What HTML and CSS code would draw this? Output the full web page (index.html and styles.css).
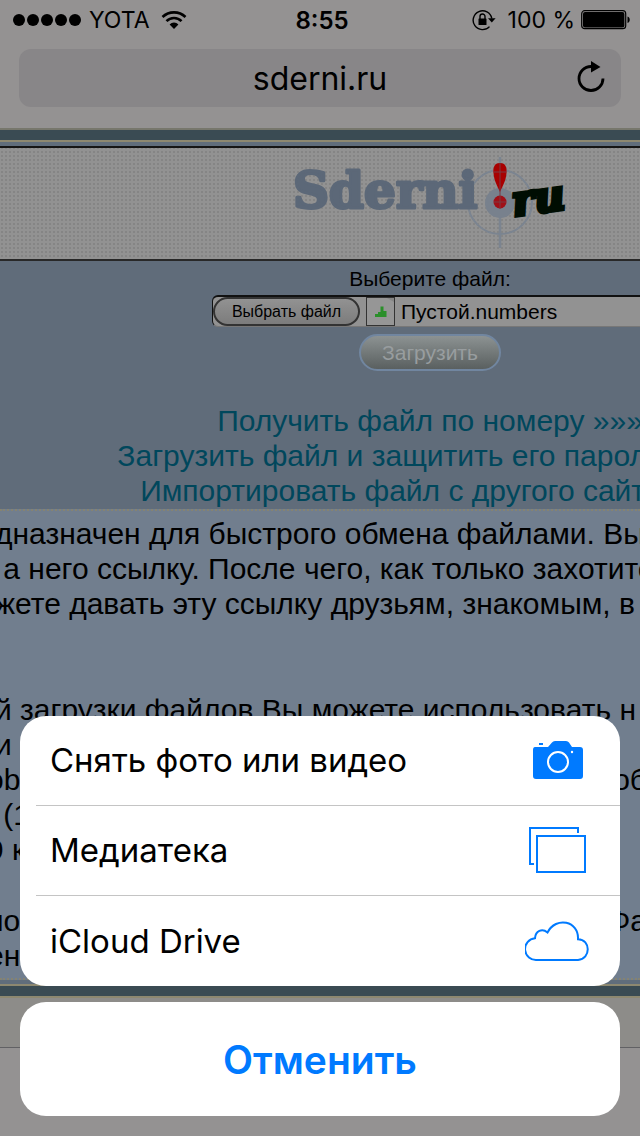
FILE: index.html
```html
<!DOCTYPE html>
<html lang="ru">
<head>
  <meta charset="UTF-8" />
  <meta name="viewport" content="width=device-width, initial-scale=1.0" />
  <title>sderni.ru</title>
  <link rel="stylesheet" href="styles.css">
</head>
<body>
  <div class="screen">
    <!-- Safari -->
    <header class="browser">
      <div class="status">
        <div class="status-left">
          <span class="dots"><i></i><i></i><i></i><i></i><i></i></span>
          <span>YOTA</span>
          <svg class="wifi" width="26" height="20" viewBox="0 0 26 20">
            <path d="M1.500 7a16.500 16.500 0 0 1 23 0M5.500 11.200a10.500 10.500 0 0 1 15 0" fill="none" stroke="#000" stroke-width="2.600"/>
            <path d="M8.600 14.400a6.200 6.200 0 0 1 8.800 0L13 19z"/>
          </svg>
        </div>
        <b class="time">8:55</b>
        <div class="status-right">
          <svg width="24" height="22" viewBox="0 0 24 22">
            <path d="M17.500 17.600A9.400 9.400 0 1 1 19.800 9.500" fill="none" stroke="#000" stroke-width="1.400"/>
            <path d="M16 9.300h7.600l-3.800 4.200z"/>
            <rect x="6.500" y="9.500" width="8" height="6.500" rx="0.600"/>
            <path d="M8 10V7.500a2.500 2.500 0 0 1 5 0V10" fill="none" stroke="#000" stroke-width="1.400"/>
          </svg>
          <span class="percent">100 %</span>
          <svg width="50" height="20" viewBox="0 0 50 20">
            <rect x="0.700" y="0.700" width="44" height="18" rx="3" fill="none" stroke="#000" stroke-width="1.200"/>
            <rect x="2" y="2" width="41.400" height="15.400" rx="2"/>
            <path d="M46.500 6.500c3 0.500 3 6 0 6.500z"/>
          </svg>
        </div>
      </div>
      <div class="address">
        <input type="text" value="sderni.ru" aria-label="Адрес">
        <button type="button" class="reload" aria-label="Обновить">
          <svg width="30" height="32" viewBox="0 0 30 32">
            <path d="M15 5.500A12 12 0 1 0 27 17.500" fill="none" stroke="#000" stroke-width="2.800"/>
            <path d="M15 0v11.500l9.500-5.600z"/>
          </svg>
        </button>
      </div>
    </header>

    <!-- Страница сайта, правая часть уходит за край экрана -->
    <main class="site">
      <div class="band"></div>
      <div class="banner">
        <svg width="276" height="94" viewBox="0 0 276 94" role="img" aria-label="Sderni.ru">
          <g fill="none" stroke="#7b8490" stroke-width="2">
            <circle cx="208" cy="46" r="32"/>
            <path d="M208 1v91" stroke-width="2.500"/>
          </g>
          <circle cx="208" cy="47" r="15" fill="#78818d"/>
          <text class="logo-main" x="1" y="52">Sderni</text>
          <path d="M208 7c-6 0-7 5-6.500 10 .5 8 4 13 6.500 19 2.500-6 6-11 6.500-19 .5-5-.5-10-6.500-10z" fill="#a80000"/>
          <circle cx="208" cy="46" r="6.500" fill="#a01018"/>
          <path d="M208 7v46M202 46h12M202 16h12" stroke="#7b3b43" stroke-width="1"/>
          <text class="logo-ru" x="222" y="60" transform="rotate(-8 222 60)">ru</text>
        </svg>
      </div>

      <form class="upload">
        <label for="pick">Выберите файл:</label>
        <div class="file">
          <button type="button" id="pick" class="pick">Выбрать файл</button>
          <svg class="thumb" width="29" height="29" viewBox="0 0 29 29">
            <rect x="0.500" y="0.500" width="28" height="28" fill="#969696" stroke="#333"/>
            <path d="M21 1h7v4z" fill="#858585"/>
            <path d="M9 20v-3h3v3zM12 20v-5h3v5zM14.500 20V9.500h3V20zM17.500 20v-6h3v6z" fill="#2b8f2b"/>
          </svg>
          <span>Пустой.numbers</span>
        </div>
        <button type="submit" class="send" disabled>Загрузить</button>
        <nav class="links">
          <a href="#">Получить файл по номеру »»»</a>
          <a href="#">Загрузить файл и защитить его паролем »»»</a>
          <a href="#">Импортировать файл с другого сайта »»»</a>
        </nav>
      </form>
    </main>

    <section class="about">
      <p>дназначен для быстрого обмена файлами. Вы</p>
      <p> а него ссылку. После чего, как только захотите</p>
      <p>жете давать эту ссылку друзьям, знакомым, в</p>
      <p class="gap">й загрузки файлов Вы можете использовать н</p>
      <p>и</p>
      <p class="cut"><span>ob</span><span>об</span></p>
      <p> (1</p>
      <p class="cut">9 к</p>
      <p class="cut space"><span>но</span><span>Фа</span></p>
      <p class="cut">ен</p>
    </section>
    <div class="band bottom"></div>
    <footer class="toolbar"></footer>

    <!-- Меню выбора источника -->
    <div class="sheet">
      <div class="options">
        <button type="button">
          <span>Снять фото или видео</span>
          <svg width="64" height="48" viewBox="0 0 64 48" fill="#007aff">
            <path d="M10 11h13l4-4.500Q28 5 30 5h11q2 0 3 1.500L47 11h8q3 0 3 3v26q0 3-3 3H11q-3 0-3-3V14q0-3 2-3z"/>
            <rect x="14" y="7" width="4" height="2"/>
            <circle cx="33" cy="26" r="10" fill="none" stroke="#fff" stroke-width="2"/>
            <circle cx="47" cy="16" r="1.200" fill="#fff"/>
          </svg>
        </button>
        <button type="button">
          <span>Медиатека</span>
          <svg width="64" height="48" viewBox="0 0 64 48" fill="none" stroke="#007aff" stroke-width="2">
            <path d="M9 38H5V2h48v5"/>
            <rect x="12" y="10" width="48" height="36"/>
          </svg>
        </button>
        <button type="button">
          <span>iCloud Drive</span>
          <svg width="64" height="48" viewBox="0 0 64 48" fill="none" stroke="#007aff" stroke-width="2">
            <path d="M12 43a10.800 10.800 0 0 1-2-21.800C10.500 14 17 11 22.500 15.500 31-1 54 4 53 22.200 66 22.500 66 42 53 43z"/>
          </svg>
        </button>
      </div>
      <button type="button" class="cancel">Отменить</button>
    </div>
  </div>
</body>
</html>
```
FILE: styles.css
```css
* {
  box-sizing: border-box;
}
body {
  margin: 0;
  background: #949292;
  color: #000;
  font-family: "Liberation Sans", Arial, sans-serif;
}
button, input {
  font-family: inherit;
  color: inherit;
}
.screen {
  position: relative;
  display: flex;
  flex-direction: column;
  min-height: 100vh;
  overflow: hidden;
}

/* браузер */
.browser {
  height: 128px;
  padding: 0 19px;
  font-family: Inter, sans-serif;
}
.status {
  display: grid;
  grid-template-columns: 1fr auto 1fr;
  align-items: center;
  height: 40px;
  margin: 0 -10px 9px -6px;
  font-size: 23px;
}
.status-left, .status-right {
  display: flex;
  align-items: center;
}
.status-left {
  gap: 8px;
}
.status-right {
  justify-content: flex-end;
}
.percent {
  margin: 0 6px 0 12px;
}
.dots {
  display: flex;
  gap: 2px;
}
.dots i {
  width: 12px;
  height: 12px;
  border-radius: 50%;
  background: #000;
}
.wifi {
  margin-left: 3px;
}
.time {
  font-size: 24px;
  font-weight: 600;
}
.address {
  position: relative;
}
.address input {
  display: block;
  width: 100%;
  height: 58px;
  padding: 0;
  border: 0;
  border-radius: 12px;
  background: #888688;
  font-size: 32px;
  text-align: center;
}
.reload {
  position: absolute;
  top: 12px;
  right: 15px;
  padding: 0;
  border: 0;
  background: none;
}
.reload svg {
  display: block;
}

/* сайт */
.site {
  width: calc(100% + 220px);
}
.band {
  height: 14px;
  border-top: 2px solid #77776c;
  border-bottom: 2px solid #8d8870;
  background: #3a4b53;
}
.banner {
  display: flex;
  justify-content: center;
  align-items: center;
  height: 119px;
  border-top: 4px solid #606d7b;
  border-bottom: 2px solid #282828;
  background-color: #929292;
  background-image: radial-gradient(#858585 1px, transparent 1px);
  background-size: 4px 4px;
  box-shadow: inset 0 2px #151515;
}
.logo-main {
  fill: #5c6878;
  stroke: #5c6878;
  stroke-width: 3px;
  stroke-linejoin: round;
  font: bold 50px "DejaVu Serif", serif;
}
.logo-ru {
  fill: #000d02;
  stroke: #000d02;
  stroke-width: 4px;
  font: italic bold 42px "DejaVu Serif", serif;
}
.upload {
  display: flex;
  flex-direction: column;
  align-items: center;
  height: 248px;
  padding-top: 6px;
  background: #606c7a;
  font-size: 21px;
}
.upload label {
  line-height: 24px;
}
.file {
  display: flex;
  align-items: center;
  gap: 6px;
  width: 436px;
  height: 32px;
  margin-top: 4px;
  border: 1px solid #777;
  border-top: 2px solid #111;
  border-left-color: #111;
  border-radius: 6px;
  background: #929292;
}
.pick {
  width: 147px;
  height: 29px;
  padding: 0;
  border: 2px solid #333;
  border-radius: 15px;
  background: linear-gradient(#929292, #7c7c7c);
  font-size: 16px;
}
.send {
  width: 142px;
  height: 37px;
  margin-top: 7px;
  padding: 0;
  border: 2px solid #7186a0;
  border-radius: 19px;
  background: linear-gradient(#8c9292, #5a6060);
  color: #989d9f;
  font-size: 21px;
}
.links {
  display: flex;
  flex-direction: column;
  align-items: center;
  margin-top: 32px;
}
.links a {
  color: #00475c;
  font-size: 30px;
  line-height: 35px;
  text-decoration: none;
  white-space: nowrap;
}
.about {
  height: 471px;
  padding-top: 5px;
  border-top: 2px dotted #858372;
  border-bottom: 2px dotted #858372;
  background: #717e8e;
  font-size: 30px;
  line-height: 35px;
}
.about p {
  display: flex;
  justify-content: space-between;
  margin: 0 -7px 0 -5px;
  white-space: pre;
}
.about .cut {
  margin-left: -13px;
}
.about .gap {
  margin-top: 71px;
}
.about .space {
  margin-top: 36px;
}
.bottom {
  border-top-color: #8d8870;
  box-shadow: 0 -4px #606d7b;
  margin-top: 4px;
}
.toolbar {
  flex: 1;
  background: linear-gradient(#8d8c89 49px, #616164 49px, #616164 50px, #949292 50px);
}

/* меню */
.sheet {
  position: absolute;
  right: 20px;
  bottom: 20px;
  left: 20px;
  font-family: Inter, sans-serif;
}
.options {
  overflow: hidden;
  margin-bottom: 16px;
  border-radius: 26px;
  background: #fff;
}
.options button {
  display: flex;
  justify-content: space-between;
  align-items: center;
  width: calc(100% - 16px);
  height: 90px;
  margin-left: 16px;
  padding: 0 31px 1px 14px;
  border: 0;
  border-bottom: 1px solid #c4c4c4;
  background: none;
  font-size: 33px;
}
.options button:last-child {
  border-bottom: 0;
}
.cancel {
  display: block;
  width: 100%;
  height: 114px;
  border: 0;
  border-radius: 26px;
  background: #fff;
  color: #007aff;
  font-size: 39px;
  font-weight: 600;
}
```
